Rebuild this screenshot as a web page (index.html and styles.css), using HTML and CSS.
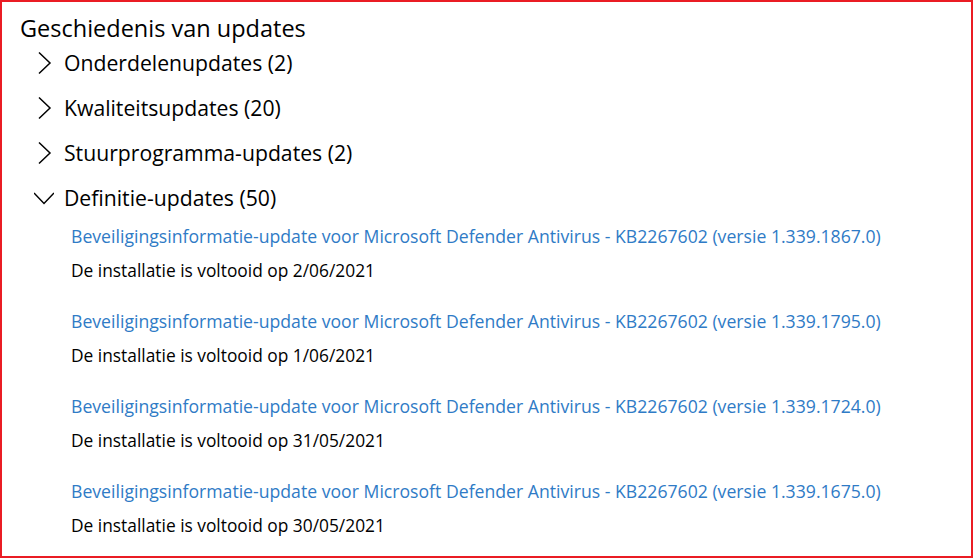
FILE: index.html
```html
<!DOCTYPE html>
<html lang="nl">
<head>
<meta charset="utf-8">
<title>Geschiedenis van updates</title>
<link rel="stylesheet" href="styles.css">
</head>
<body>
<div class="frame">
  <h1 class="title">Geschiedenis van updates</h1>
  <ul class="groups">
    <li class="group">
      <div class="group-head">
        <svg class="chev" width="20" height="24" viewBox="0 0 20 24"><path d="M5 1.5 L16 12 L5 22.5" fill="none" stroke="#000" stroke-width="1.5"/></svg>
        <span>Onderdelenupdates (2)</span>
      </div>
    </li>
    <li class="group">
      <div class="group-head">
        <svg class="chev" width="20" height="24" viewBox="0 0 20 24"><path d="M5 1.5 L16 12 L5 22.5" fill="none" stroke="#000" stroke-width="1.5"/></svg>
        <span>Kwaliteitsupdates (20)</span>
      </div>
    </li>
    <li class="group">
      <div class="group-head">
        <svg class="chev" width="20" height="24" viewBox="0 0 20 24"><path d="M5 1.5 L16 12 L5 22.5" fill="none" stroke="#000" stroke-width="1.5"/></svg>
        <span>Stuurprogramma-updates (2)</span>
      </div>
    </li>
    <li class="group open">
      <div class="group-head">
        <svg class="chev" width="20" height="24" viewBox="0 0 20 24"><path d="M0 7 L10 17.5 L20 7" fill="none" stroke="#000" stroke-width="1.5"/></svg>
        <span>Definitie-updates (50)</span>
      </div>
      <ul class="updates">
        <li class="update">
          <a class="update-link" href="#">Beveiligingsinformatie-update voor Microsoft Defender Antivirus - KB2267602 (versie 1.339.1867.0)</a>
          <div class="update-status">De installatie is voltooid op 2/06/2021</div>
        </li>
        <li class="update">
          <a class="update-link" href="#">Beveiligingsinformatie-update voor Microsoft Defender Antivirus - KB2267602 (versie 1.339.1795.0)</a>
          <div class="update-status">De installatie is voltooid op 1/06/2021</div>
        </li>
        <li class="update">
          <a class="update-link" href="#">Beveiligingsinformatie-update voor Microsoft Defender Antivirus - KB2267602 (versie 1.339.1724.0)</a>
          <div class="update-status">De installatie is voltooid op 31/05/2021</div>
        </li>
        <li class="update">
          <a class="update-link" href="#">Beveiligingsinformatie-update voor Microsoft Defender Antivirus - KB2267602 (versie 1.339.1675.0)</a>
          <div class="update-status">De installatie is voltooid op 30/05/2021</div>
        </li>
      </ul>
    </li>
  </ul>
</div>
</body>
</html>
```
FILE: styles.css
```css
* { box-sizing: border-box; }
html, body { margin: 0; padding: 0; background: #fff; }
body {
  font-family: "Open Sans", "Noto Sans", "Liberation Sans", sans-serif;
  color: #000;
  width: 974px;
  height: 559px;
  overflow: hidden;
}
.frame {
  width: 973px;
  height: 558px;
  border: 2px solid #ea1c24;
  padding: 11px 0 0 18px;
}
.title {
  margin: 0;
  font-size: 23.5px;
  font-weight: 400;
  line-height: 30px;
}
.groups {
  list-style: none;
  margin: -3px 0 0 0;
  padding: 0 0 0 14px;
}
.group-head {
  display: flex;
  align-items: center;
  height: 45px;
  font-size: 21.2px;
}
.chev {
  flex: none;
  margin-right: 10px;
}
.updates {
  list-style: none;
  margin: 0;
  padding: 0 0 0 37px;
}
.update {
  margin-bottom: 17px;
}
.update-link {
  display: block;
  color: #2f7bc6;
  text-decoration: none;
  font-size: 17.65px;
  line-height: 32px;
}
.update-status {
  font-size: 17.35px;
  line-height: 36px;
}
```
